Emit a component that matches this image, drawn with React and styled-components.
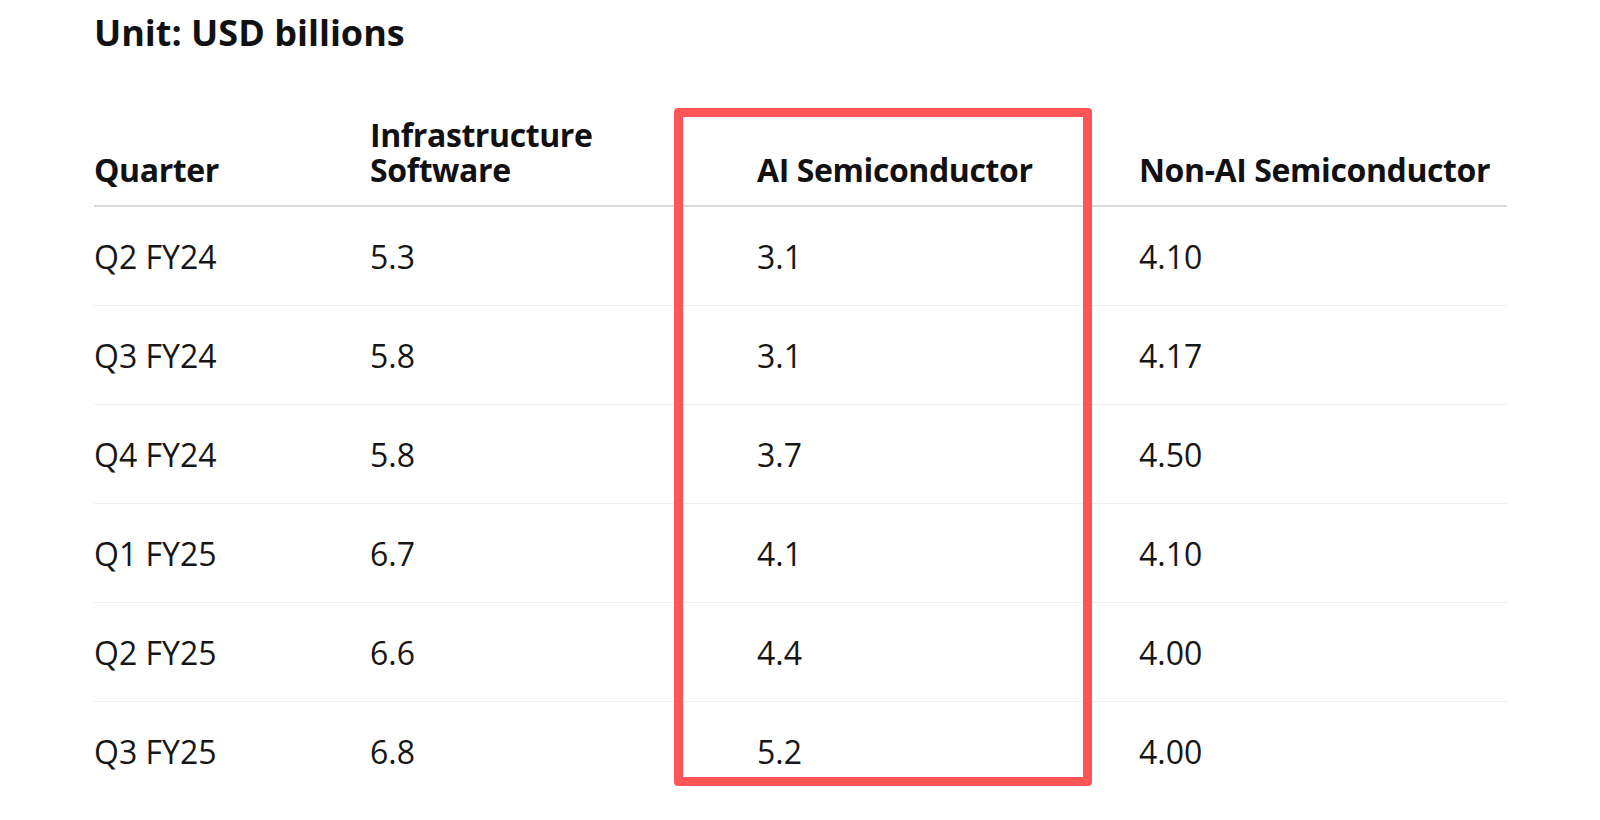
import React from 'react';
import styled, { createGlobalStyle } from 'styled-components';

const GlobalStyle = createGlobalStyle`
  html, body {
    margin: 0;
    padding: 0;
    background: #ffffff;
  }

  body {
    font-family: "Open Sans", "Noto Sans", "Liberation Sans", sans-serif;
    color: #141414;
  }
`;

const Page = styled.div`
  width: 1600px;
  height: 820px;
  box-sizing: border-box;
  padding: 8px 0 0 94px;
  overflow: hidden;
`;

const UnitLabel = styled.h2`
  margin: 0;
  font-size: 36px;
  font-weight: 700;
  line-height: 49px;
  color: #111111;
`;

const TableWrap = styled.div`
  position: relative;
  width: 1413px;
  margin-top: 44px;
`;

const Row = styled.div`
  display: grid;
  grid-template-columns: 276px 387px 382px 368px;
  box-sizing: border-box;
`;

const HeadRow = styled(Row)`
  align-items: end;
  padding: 16px 0 18px;
  border-bottom: 2px solid #dadada;
`;

const BodyRow = styled(Row)`
  align-items: center;
  height: 99px;
  border-bottom: ${(p) => (p.$last ? 'none' : '1px solid #efefef')};
`;

const HeadCell = styled.div`
  font-size: 32px;
  font-weight: 700;
  line-height: 35px;
  letter-spacing: -0.4px;
  color: #111111;
`;

const Cell = styled.div`
  font-size: 32px;
  font-weight: 400;
  color: #161616;
`;

// annotation frame drawn over the AI column
const Highlight = styled.div`
  position: absolute;
  left: 580px;
  top: 7px;
  width: 418px;
  height: 678px;
  box-sizing: border-box;
  border: 9px solid #fd5656;
  border-radius: 4px;
  pointer-events: none;
`;

const rows = [
  ['Q2 FY24', '5.3', '3.1', '4.10'],
  ['Q3 FY24', '5.8', '3.1', '4.17'],
  ['Q4 FY24', '5.8', '3.7', '4.50'],
  ['Q1 FY25', '6.7', '4.1', '4.10'],
  ['Q2 FY25', '6.6', '4.4', '4.00'],
  ['Q3 FY25', '6.8', '5.2', '4.00'],
];

const App = () => (
  <>
    <GlobalStyle />
    <Page>
      <UnitLabel>Unit: USD billions</UnitLabel>
      <TableWrap>
        <Highlight />
        <HeadRow>
          <HeadCell>Quarter</HeadCell>
          <HeadCell>
            Infrastructure
            <br />
            Software
          </HeadCell>
          <HeadCell>AI Semiconductor</HeadCell>
          <HeadCell>Non-AI Semiconductor</HeadCell>
        </HeadRow>
        {rows.map((r, idx) => (
          <BodyRow key={r[0]} $last={idx === rows.length - 1}>
            {r.map((v, i) => (
              <Cell key={i}>{v}</Cell>
            ))}
          </BodyRow>
        ))}
      </TableWrap>
    </Page>
  </>
);

export default App;
